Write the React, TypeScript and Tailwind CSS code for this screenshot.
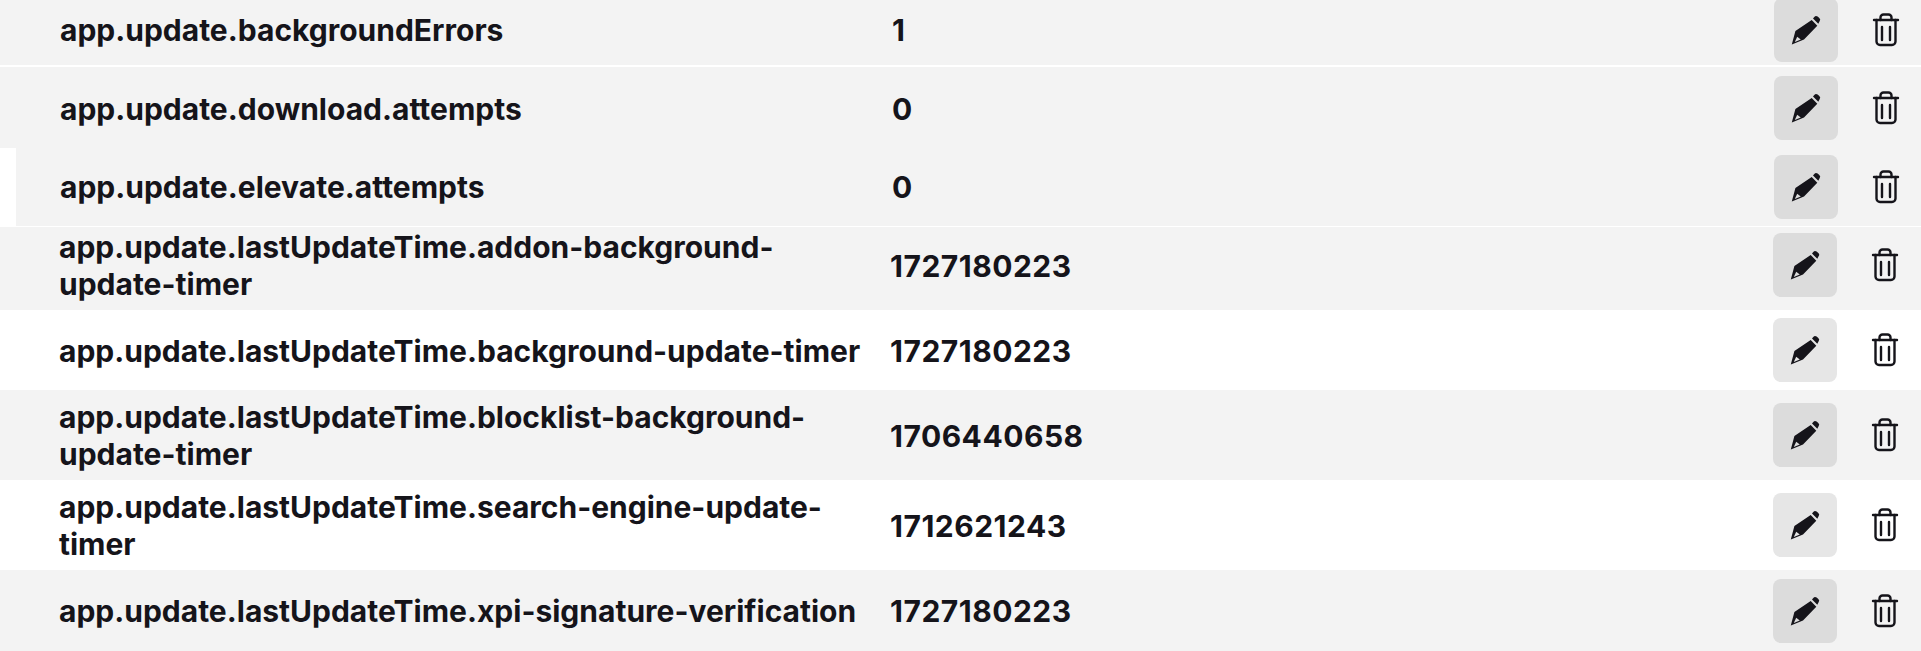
const rows = [
  { name: "app.update.backgroundErrors", value: "1", box: "h-[65px] pb-[5px] bg-[#f3f3f3] pl-[60px] mb-[2px]", text: "", shifted: true },
  { name: "app.update.download.attempts", value: "0", box: "h-[81px] bg-[#f3f3f3] pl-[60px]", text: "pt-[4px]", shifted: true },
  { name: "app.update.elevate.attempts", value: "0", box: "h-[78px] bg-[#f3f3f3] pl-[44px] border-l-[16px] border-white mb-[1px]", text: "", shifted: true },
  { name: "app.update.lastUpdateTime.addon-background-update-timer", value: "1727180223", box: "h-[83px] pb-[7px] bg-[#f3f3f3] pl-[59px]", text: "pt-[2px]" },
  { name: "app.update.lastUpdateTime.background-update-timer", value: "1727180223", box: "h-[80px] bg-white pl-[59px]", text: "pt-[2px]" },
  { name: "app.update.lastUpdateTime.blocklist-background-update-timer", value: "1706440658", box: "h-[90px] bg-[#f3f3f3] pl-[59px]", text: "pt-[2px]" },
  { name: "app.update.lastUpdateTime.search-engine-update-timer", value: "1712621243", box: "h-[90px] bg-white pl-[59px]", text: "pt-[2px]" },
  { name: "app.update.lastUpdateTime.xpi-signature-verification", value: "1727180223", box: "h-[81px] bg-[#f3f3f3] pl-[59px]", text: "pt-[2px]" },
];

function PencilIcon({ light }: { light: boolean }) {
  return (
    <svg width="32" height="32" viewBox="0 0 32 32">
      <path fill="#15141a" d="M23 4.600 24.300 2.900a2.400 2.400 0 0 1 3.300-.4l1.700 1.500a2.400 2.400 0 0 1 .3 3.300L28.300 9.800zM21.700 6 27.300 11.800 14 25.400 1.800 30.400 5.400 17z" />
      <path fill={light ? "#e6e6e6" : "#dcdcdc"} d="M7.200 22.800 10.800 25.400 4.800 28z" />
    </svg>
  );
}

function TrashIcon() {
  return (
    <svg width="28" height="34" viewBox="0 0 28 34" fill="none" stroke="#15141a" strokeWidth="2.4" strokeLinecap="round" strokeLinejoin="round">
      <path d="M2 7h24" />
      <path d="M8.500 7V4.500A3 3 0 0 1 11.500 1.500h5A3 3 0 0 1 19.500 4.500V7" />
      <path d="M4.500 7v21.500A3.500 3.500 0 0 0 8 32h12a3.500 3.500 0 0 0 3.500-3.500V7" />
      <path d="M10 14v13M18 14v13" />
    </svg>
  );
}

export default function App() {
  return (
    <div className="h-[651px] w-[1921px] overflow-hidden bg-white font-['Inter',sans-serif] text-[30px] leading-[37px] font-bold text-[#15141a]">
      {rows.map((row) => {
        const light = row.box.includes("bg-white");
        return (
          <div key={row.name} className={`flex items-center ${row.box}`}>
            <div className={`${row.shifted ? "w-[832px]" : "w-[831px]"} shrink-0 pr-[22px] ${row.text}`}>{row.name}</div>
            <div className={`flex-1 tracking-[0.5px] ${row.text}`}>{row.value}</div>
            <button className={light ? "flex h-16 w-16 items-center justify-center rounded-lg bg-[#e6e6e6]" : "flex h-16 w-16 items-center justify-center rounded-lg bg-[#dcdcdc]"}>
              <PencilIcon light={light} />
            </button>
            <button className={row.shifted ? "mr-[3px] ml-[16px] flex h-16 w-16 items-center justify-center" : "mr-[4px] ml-[16px] flex h-16 w-16 items-center justify-center"}>
              <TrashIcon />
            </button>
          </div>
        );
      })}
    </div>
  );
}
